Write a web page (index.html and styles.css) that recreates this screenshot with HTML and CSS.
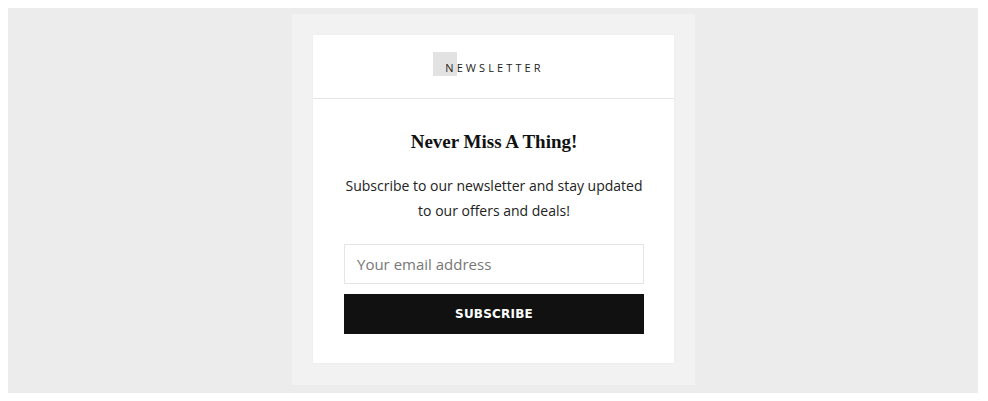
FILE: index.html
```html
<!DOCTYPE html>
<html>
<head>
<meta charset="utf-8">
<link rel="stylesheet" href="styles.css">
</head>
<body>
<div class="stage">
  <div class="panel">
    <div class="card">
      <div class="card-head">
        <span class="head-title"><span class="head-text">NEWSLETTER</span></span>
      </div>
      <div class="card-body">
        <h2 class="heading">Never Miss A Thing!</h2>
        <p class="lead">Subscribe to our newsletter and stay updated to our offers and deals!</p>
        <form class="form">
          <input class="email" type="text" placeholder="Your email address">
          <button class="btn" type="button">SUBSCRIBE</button>
        </form>
      </div>
    </div>
  </div>
</div>
</body>
</html>
```
FILE: styles.css
```css
html, body { margin: 0; padding: 0; background: #fff; }
body { padding: 8px; box-sizing: border-box; width: 988px; height: 401px; font-family: "Open Sans", "Liberation Sans", sans-serif; }
.stage {
  background: #ececec;
  width: 970px;
  height: 385px;
  box-sizing: border-box;
  padding-top: 6px;
  display: flex;
  justify-content: center;
  align-items: flex-start;
}
.panel {
  background: #f2f2f2;
  width: 403px;
  box-sizing: border-box;
  padding: 21px 21px 22px 21px;
  margin-left: 1px;
}
.card {
  background: #fff;
  box-shadow: 0 0 3px rgba(0,0,0,0.04);
}
.card-head {
  height: 63px;
  border-bottom: 1px solid #e4e4e4;
  display: flex;
  align-items: center;
  justify-content: center;
}
.head-title {
  position: relative;
  font-size: 11px;
  letter-spacing: 3.1px;
  color: #222;
  margin-top: 2px;
  margin-left: 2px;
}
.head-title::before {
  content: "";
  position: absolute;
  left: -12px;
  top: -8px;
  width: 24px;
  height: 24px;
  background: #e2e2e2;
}
.head-text { position: relative; }
.card-body {
  padding: 30px 30px 29px 31px;
  text-align: center;
}
.heading {
  margin: 0 0 18px 0;
  font-family: "Liberation Serif", "DejaVu Serif", serif;
  font-weight: bold;
  font-size: 19px;
  line-height: 26px;
  color: #111;
}
.lead {
  margin: 0 0 21px 0;
  font-size: 14px;
  line-height: 25px;
  color: #222;
}
.form { display: flex; flex-direction: column; gap: 10px; margin: 0; }
.email {
  height: 40px;
  box-sizing: border-box;
  border: 1px solid #e5e5e5;
  padding: 0 12px;
  font-family: "Open Sans", sans-serif;
  font-size: 15px;
  color: #333;
  outline: none;
}
.email::placeholder { color: #777; }
.btn {
  height: 40px;
  background: #111;
  color: #fff;
  border: 0;
  font-family: "DejaVu Sans", "Liberation Sans", sans-serif;
  font-weight: bold;
  font-size: 12px;
  letter-spacing: 0.2px;
  padding: 0;
}
```
